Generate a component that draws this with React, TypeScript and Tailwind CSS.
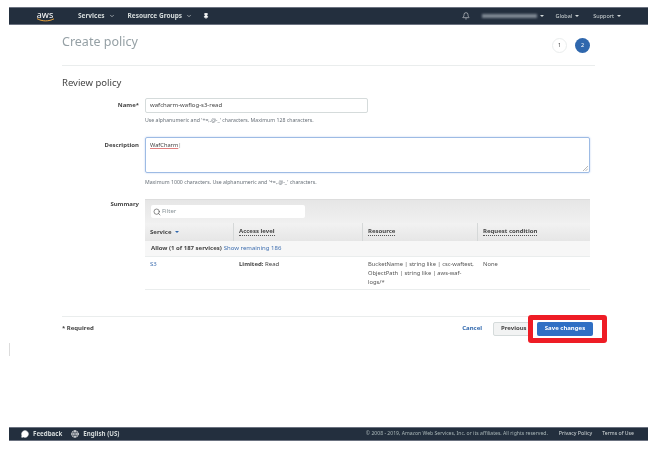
import { ChevronDown, Pin, Bell, Search, Globe, MessageCircle } from "lucide-react";

function Caret() {
  return <span className="ml-[3px] inline-block border-x-[2px] border-t-[2px] border-x-transparent border-t-[#d5dbdb]" />;
}

function TopBar() {
  return (
    <header className="h-[18px] bg-[#232f3e] border-y border-[#6b7280] flex items-center text-[6.5px] font-bold text-[#d5dbdb]">
      <div className="ml-[26px] w-[20px] flex flex-col items-center">
        <span className="text-[9px] leading-[8px] font-normal text-white">aws</span>
        <svg width="19" height="4" viewBox="0 0 19 4" className="-mt-px">
          <path d="M1 .6C6 3.6 13 3.6 18 .8" fill="none" stroke="#e8a33d" strokeWidth="1" />
        </svg>
      </div>
      <span className="ml-[23px]">Services</span>
      <ChevronDown size={6} strokeWidth={2.5} className="ml-[4px]" />
      <span className="ml-[13px]">Resource Groups</span>
      <ChevronDown size={6} strokeWidth={2.5} className="ml-[4px]" />
      <Pin size={6} strokeWidth={3} fill="#fff" className="ml-[11px] text-white" />
      <Bell size={8} strokeWidth={1.5} className="ml-auto text-white" />
      <div className="ml-[12px] w-[55px] h-[4px] bg-[#7d8792] blur-[1px]" />
      <Caret />
      <span className="ml-[12px] font-normal text-[5.5px]">Global</span>
      <Caret />
      <span className="ml-[14px] font-normal text-[5.5px]">Support</span>
      <Caret />
      <span className="w-[27px]" />
    </header>
  );
}

function FormRow({ label, labelPad, children }: { label: string; labelPad: string; children: React.ReactNode }) {
  return (
    <div className="grid grid-cols-[77px_445px] gap-x-[6px]">
      <div className={`${labelPad} text-right text-[6px] font-bold text-[#444] leading-[7px]`}>{label}</div>
      <div>{children}</div>
    </div>
  );
}

function Help({ children }: { children: React.ReactNode }) {
  return <p className="text-[5.2px] leading-[6px] text-[#687078]">{children}</p>;
}

function Th({ label, w }: { label: string; w: string }) {
  return (
    <div className={`${w} h-full flex items-center pl-[5px] border-r border-[#d5d8d8] text-[6px] font-bold text-[#444] last:border-r-0`}>
      <span className="border-b border-dotted border-[#555] leading-[7px]">{label}</span>
    </div>
  );
}

export default function App() {
  return (
    <div className="font-['Liberation_Sans'] w-[657px] h-[452px] bg-white overflow-hidden pt-[7px] px-[9px] flex flex-col blur-[0.5px]">
      <TopBar />

      <main className="flex-1 px-[53px]">
        <div className="h-[41px] border-b border-[#eaeded] flex items-center justify-between pr-[4px]">
          <h1 className="text-[12.5px] text-[#95a0a5] -mt-[5px]">Create policy</h1>
          <div className="flex gap-[8px] mt-[1px] mr-[1px]">
            <span className="w-[15px] h-[15px] rounded-full bg-white border border-[#eaeded] flex items-center justify-center text-[5.5px] text-[#444]">1</span>
            <span className="w-[15px] h-[15px] rounded-full bg-[#2f67ad] flex items-center justify-center text-[5.5px] text-white">2</span>
          </div>
        </div>

        <h2 className="mt-[10px] text-[9.5px] leading-[13px] text-[#444]">Review policy</h2>

        <div className="mt-[9px]">
          <FormRow label="Name*" labelPad="pt-[4px]">
            <div className="w-[223px] h-[15px] border border-[#d5dbdb] rounded-[2px] flex items-center pl-[4px] text-[6px] text-[#444]">wafcharm-waflog-s3-read</div>
            <div className="mt-[4px]">
              <Help>Use alphanumeric and '+=,.@-_' characters. Maximum 128 characters.</Help>
            </div>
          </FormRow>
        </div>

        <div className="mt-[14px]">
          <FormRow label="Description" labelPad="pt-[5px]">
            <div className="relative h-[36px] border border-[#9dbbe4] rounded-[2px] shadow-[0_0_2px_#b9cff0] pl-[4px] pt-[3px] text-[5.7px] leading-[8px] text-[#444]">
              <span className="underline decoration-[#e08080]">WafCharm</span>
              <span className="text-[#888]">|</span>
              <svg width="5" height="5" viewBox="0 0 5 5" className="absolute right-px bottom-px">
                <path d="M0 5 5 0M2.5 5 5 2.5" stroke="#888" strokeWidth=".6" />
              </svg>
            </div>
            <div className="mt-[6px]">
              <Help>Maximum 1000 characters. Use alphanumeric and '+=,.@-_' characters.</Help>
            </div>
          </FormRow>
        </div>

        <div className="mt-[14px]">
          <FormRow label="Summary" labelPad="pt-[2px]">
            <div className="text-[6px] text-[#444]">
              <div className="h-[24px] bg-gradient-to-b from-[#e6e6e6] to-[#f0f0f0] flex items-center pl-[6px] border-t border-[#ddd]">
                <div className="w-[154px] h-[13px] bg-white rounded-[2px] flex items-center pl-[2px] gap-[1px] text-[#879196]">
                  <Search size={8} strokeWidth={2} className="text-[#555]" />
                  <span className="text-[6px]">Filter</span>
                </div>
              </div>
              <div className="h-[18px] flex bg-gradient-to-b from-[#f2f2f2] to-[#e6e6e6]">
                <div className="w-[89px] h-full flex items-center pl-[5px] border-r border-[#d5d8d8] text-[6px] font-bold text-[#444]">
                  Service
                  <span className="ml-[4px] inline-block border-x-[2.5px] border-t-[2.5px] border-x-transparent border-t-[#2f67ad]" />
                </div>
                <Th label="Access level" w="w-[129px]" />
                <Th label="Resource" w="w-[115px]" />
                <Th label="Request condition" w="w-[112px]" />
              </div>
              <div className="h-[16px] bg-[#f7f7f7] border-b border-[#eaeded] flex items-center pl-[6px]">
                <span className="font-bold">Allow (1 of 187 services)</span>
                <span className="ml-[2px] text-[#3f6fb0]">Show remaining 186</span>
              </div>
              <div className="h-[33px] flex border-b border-[#eaeded] pt-[3px] leading-[9px]">
                <div className="w-[89px] pl-[5px] text-[#3f6fb0]">S3</div>
                <div className="w-[129px] pl-[5px]"><span className="font-bold">Limited:</span> Read</div>
                <div className="w-[115px] pl-[5px] pr-[4px] text-[5.8px] text-[#555]">BucketName | string like | csc-waftest, ObjectPath | string like | aws-waf-logs/*</div>
                <div className="w-[112px] pl-[5px] text-[5.8px] text-[#555]">None</div>
              </div>
            </div>
          </FormRow>
        </div>

        <div className="mt-[26px] border-t border-[#eaeded] h-[24px] flex items-center justify-between">
          <span className="text-[6px] font-bold text-[#444]">* Required</span>
          <div className="flex items-center mr-[2px]">
            <span className="text-[6px] font-bold text-[#2f67ad]">Cancel</span>
            <button className="block ml-[11px] w-[40px] h-[14px] pl-[7px] text-left rounded-[2px] bg-[#f2f3f3] border border-[#d5dbdb] text-[6px] font-bold text-[#444]">Previous</button>
            <div className="relative ml-[4px]">
              <button className="block w-[56px] h-[14px] rounded-[2px] bg-[#2f6fc4] text-[6px] font-bold text-white">Save changes</button>
              <div className="absolute -left-[9px] -top-[7px] w-[79px] h-[28px] border-[5px] border-[#ee1c25] rounded-[3px]" />
            </div>
          </div>
        </div>

        <div className="-ml-[53px] mt-[3px] w-px h-[13px] bg-[#dcdcdc]" />
      </main>

      <footer className="mb-[11px] h-[14px] bg-[#232f3e] border-y border-[#6b7280] flex items-center text-[#d5dbdb]">
        <MessageCircle size={8} fill="#fff" className="ml-[12px] text-white" />
        <span className="ml-[4px] font-bold text-[6.2px]">Feedback</span>
        <Globe size={8} className="ml-[9px] text-white" />
        <span className="ml-[4px] font-bold text-[6.2px]">English (US)</span>
        <span className="ml-auto text-[5.1px] text-[#aab7b8]">© 2008 - 2019, Amazon Web Services, Inc. or its affiliates. All rights reserved.</span>
        <span className="ml-[11px] text-[5.3px]">Privacy Policy</span>
        <span className="ml-[10px] mr-[14px] text-[5.2px]">Terms of Use</span>
      </footer>
    </div>
  );
}
